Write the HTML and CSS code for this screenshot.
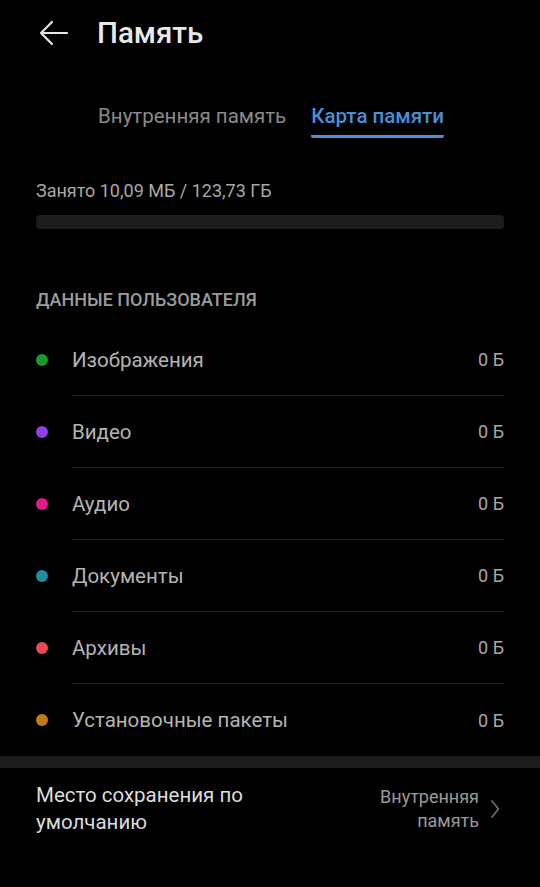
FILE: index.html
```html
<!DOCTYPE html>
<html lang="ru">
<head>
  <meta charset="UTF-8">
  <meta name="viewport" content="width=device-width, initial-scale=1.0">
  <title>Память</title>
  <link rel="stylesheet" href="styles.css">
</head>
<body>
  <div class="screen">
    <div class="top-bar">
      <svg class="back-icon" width="30" height="26" viewBox="0 0 30 26">
        <path d="M28 13 H3 M13 2 L2 13 L13 24" fill="none" stroke="#e6e6e6" stroke-width="2.2" stroke-linecap="round" stroke-linejoin="round"/>
      </svg>
      <h1>Память</h1>
    </div>

    <div class="tabs">
      <span class="tab">Внутренняя память</span>
      <span class="tab active">Карта памяти</span>
    </div>

    <div class="usage">
      <p class="usage-text">Занято 10,09 МБ / 123,73 ГБ</p>
      <div class="usage-bar"></div>
    </div>

    <h2 class="section-title">ДАННЫЕ ПОЛЬЗОВАТЕЛЯ</h2>

    <ul class="data-list">
      <li class="data-row">
        <span class="dot dot-images"></span>
        <div class="row-body"><span class="row-name">Изображения</span><span class="row-size">0 Б</span></div>
      </li>
      <li class="data-row">
        <span class="dot dot-video"></span>
        <div class="row-body"><span class="row-name">Видео</span><span class="row-size">0 Б</span></div>
      </li>
      <li class="data-row">
        <span class="dot dot-audio"></span>
        <div class="row-body"><span class="row-name">Аудио</span><span class="row-size">0 Б</span></div>
      </li>
      <li class="data-row">
        <span class="dot dot-docs"></span>
        <div class="row-body"><span class="row-name">Документы</span><span class="row-size">0 Б</span></div>
      </li>
      <li class="data-row">
        <span class="dot dot-archives"></span>
        <div class="row-body"><span class="row-name">Архивы</span><span class="row-size">0 Б</span></div>
      </li>
      <li class="data-row">
        <span class="dot dot-packages"></span>
        <div class="row-body"><span class="row-name">Установочные пакеты</span><span class="row-size">0 Б</span></div>
      </li>
    </ul>

    <div class="band"></div>

    <div class="setting-row">
      <span class="setting-name">Место сохранения по умолчанию</span>
      <span class="setting-value">Внутренняя<br>память</span>
      <svg class="chevron" width="10" height="20" viewBox="0 0 10 20">
        <path d="M2 2 L8.5 10 L2 18" fill="none" stroke="#6a6a6a" stroke-width="1.8" stroke-linecap="round" stroke-linejoin="round"/>
      </svg>
    </div>
  </div>
</body>
</html>
```

FILE: styles.css
```css
body {
  margin: 0;
  background-color: #000000;
  font-family: Roboto, "Noto Sans", sans-serif;
  color: #e0e0e0;
}

.screen {
  width: 540px;
  height: 887px;
  overflow: hidden;
}

.top-bar {
  display: flex;
  align-items: center;
  height: 66px;
  padding-left: 39px;
}

.back-icon {
  display: block;
  margin-right: 28px;
}

h1 {
  margin: 0;
  font-size: 29.5px;
  font-weight: 500;
  color: #e8e8e8;
}

.tabs {
  display: flex;
  justify-content: center;
  gap: 25px;
  margin-top: 38px;
  padding-left: 2px;
}

.tab {
  font-size: 20.5px;
  line-height: 24px;
  color: #8a8a8a;
  padding-bottom: 7px;
  border-bottom: 3px solid transparent;
}

.tab.active {
  color: #4a8fd8;
  font-weight: 500;
  border-bottom-color: #4a8fd8;
  border-radius: 2px;
}

.usage {
  padding: 0 36px;
  margin-top: 41px;
}

.usage-text {
  margin: 0;
  font-size: 18px;
  color: #a8a8a8;
  line-height: 24px;
}

.usage-bar {
  margin-top: 12px;
  height: 14px;
  border-radius: 4px;
  background-color: #1d1d1d;
}

.section-title {
  margin: 59px 0 0 36px;
  font-size: 18px;
  font-weight: 500;
  color: #9c9c9c;
  line-height: 24px;
}

.data-list {
  list-style: none;
  margin: 12px 0 0;
  padding: 0 36px;
}

.data-row {
  display: flex;
  align-items: center;
  height: 72px;
}

.dot {
  width: 12px;
  height: 12px;
  border-radius: 50%;
  margin-right: 24px;
  flex-shrink: 0;
}

.dot-images { background-color: #1b9a2b; }
.dot-video { background-color: #8e3fe6; }
.dot-audio { background-color: #e5178a; }
.dot-docs { background-color: #1f8e9e; }
.dot-archives { background-color: #ea4a52; }
.dot-packages { background-color: #c27a1c; }

.row-body {
  flex: 1;
  height: 100%;
  display: flex;
  align-items: center;
  justify-content: space-between;
  border-bottom: 1px solid #262626;
  box-sizing: border-box;
}

.data-row:last-child .row-body {
  border-bottom: none;
}

.row-name {
  font-size: 20.5px;
  color: #b4b4b4;
}

.row-size {
  font-size: 18px;
  color: #a8a8a8;
}

.band {
  height: 12px;
  background-color: #1c1c1c;
}

.setting-row {
  display: flex;
  align-items: center;
  padding: 14px 40px 0 36px;
}

.setting-name {
  flex: 1;
  font-size: 20.5px;
  line-height: 27px;
  color: #dcdcdc;
  max-width: 240px;
}

.setting-value {
  margin-left: auto;
  text-align: right;
  font-size: 18px;
  line-height: 24px;
  color: #9a9a9a;
  margin-right: 11px;
}

.chevron {
  display: block;
}
```
